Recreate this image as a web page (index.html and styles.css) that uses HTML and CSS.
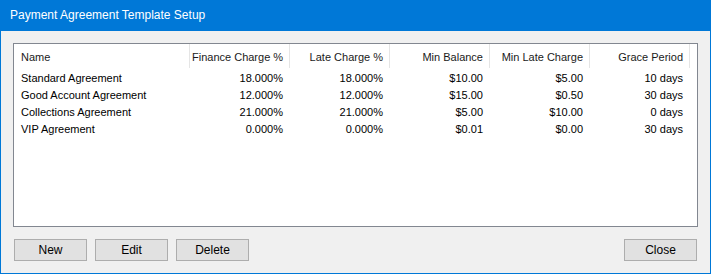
FILE: index.html
```html
<!DOCTYPE html>
<html lang="en">
<head>
  <meta charset="UTF-8">
  <title>Payment Agreement Template Setup</title>
  <link rel="stylesheet" href="styles.css">
</head>
<body>

  <div class="window">
    <div class="titlebar">Payment Agreement Template Setup</div>

    <!-- Agreement templates list -->
    <div class="list-box">
      <div class="list-row list-head">
        <div class="cell">Name</div>
        <div class="cell num">Finance Charge %</div>
        <div class="cell num">Late Charge %</div>
        <div class="cell num">Min Balance</div>
        <div class="cell num">Min Late Charge</div>
        <div class="cell num">Grace Period</div>
      </div>
      <div class="list-body">
        <div class="list-row">
          <div class="cell">Standard Agreement</div>
          <div class="cell num">18.000%</div>
          <div class="cell num">18.000%</div>
          <div class="cell num">$10.00</div>
          <div class="cell num">$5.00</div>
          <div class="cell num">10 days</div>
        </div>
        <div class="list-row">
          <div class="cell">Good Account Agreement</div>
          <div class="cell num">12.000%</div>
          <div class="cell num">12.000%</div>
          <div class="cell num">$15.00</div>
          <div class="cell num">$0.50</div>
          <div class="cell num">30 days</div>
        </div>
        <div class="list-row">
          <div class="cell">Collections Agreement</div>
          <div class="cell num">21.000%</div>
          <div class="cell num">21.000%</div>
          <div class="cell num">$5.00</div>
          <div class="cell num">$10.00</div>
          <div class="cell num">0 days</div>
        </div>
        <div class="list-row">
          <div class="cell">VIP Agreement</div>
          <div class="cell num">0.000%</div>
          <div class="cell num">0.000%</div>
          <div class="cell num">$0.01</div>
          <div class="cell num">$0.00</div>
          <div class="cell num">30 days</div>
        </div>
      </div>
    </div>

    <!-- Buttons -->
    <div class="button-bar">
      <button class="button">New</button>
      <button class="button">Edit</button>
      <button class="button">Delete</button>
      <button class="button close">Close</button>
    </div>
  </div>

</body>
</html>
```

FILE: styles.css
```css
body {
  margin: 0;
  font-family: "Liberation Sans", Arial, sans-serif;
}
.window {
  width: 711px;
  height: 274px;
  box-sizing: border-box;
  border: 1px solid #0078d7;
  border-top: none;
  background-color: #f0f0f0;
}
.titlebar {
  height: 31px;
  line-height: 31px;
  padding-left: 10px;
  background-color: #0078d7;
  color: white;
  font-size: 12px;
  margin: 0 -1px;
}
.list-box {
  margin: 12px 0 0 12px;
  width: 685px;
  height: 184px;
  box-sizing: border-box;
  border: 1px solid #828790;
  background-color: white;
  font-size: 11px;
  color: #000;
}
.list-body {
  padding-top: 2px;
}
.list-row {
  display: grid;
  grid-template-columns: 176px 100px 100px 100px 100px 100px;
  height: 17px;
  line-height: 17px;
}
.list-row .cell {
  padding: 0 5px 0 7px;
  white-space: nowrap;
  overflow: hidden;
}
.list-row .cell.num {
  text-align: right;
  padding: 0 7px 0 2px;
}
.list-head {
  height: 24px;
  line-height: 26px;
  color: #1a1a1a;
}
.list-head .cell {
  border-right: 1px solid #e5e5e5;
}
.list-head .cell.num {
  padding-right: 6px;
}
.button-bar {
  display: flex;
  gap: 8px;
  margin: 12px 0 0 13px;
  width: 683px;
}
.button {
  width: 73px;
  height: 22px;
  padding: 0;
  background-color: #e1e1e1;
  border: 1px solid #adadad;
  font-family: "Liberation Sans", Arial, sans-serif;
  font-size: 12px;
  color: #000;
}
.button.close {
  margin-left: auto;
}
```
